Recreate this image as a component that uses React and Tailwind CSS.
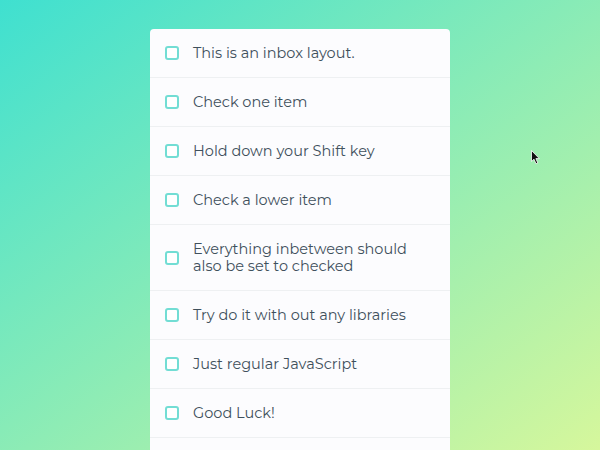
import { useState } from "react";

const ITEMS = [
    "This is an inbox layout.",
    "Check one item",
    "Hold down your Shift key",
    "Check a lower item",
    "Everything inbetween should also be set to checked",
    "Try do it with out any libraries",
    "Just regular JavaScript",
    "Good Luck!",
];

function Cursor() {
    return (
        <svg className="absolute left-[531px] top-[150px]" width="10" height="15" viewBox="0 0 10 15">
            <path d="M0.5 0.5 L0.5 11.5 L3 9.2 L5 13.8 L6.8 13 L4.9 8.6 L8.3 8.6 Z" fill="#111" stroke="#fff" strokeWidth="0.8" />
        </svg>
    );
}

export default function App() {
    const [checked, setChecked] = useState(ITEMS.map(() => false));

    const toggle = i => {
        setChecked(c => c.map((v, j) => (j === i ? !v : v)));
    };

    return (
        <div className="relative h-[450px] w-[600px] overflow-hidden bg-[linear-gradient(to_bottom_right,#3fe0d0,#d6f79c)] font-['Montserrat','Lato',sans-serif]">
            <div className="mx-auto mt-[29px] w-[300px] rounded-[4px] bg-[#fcfcfe] pb-[20px]">
                {ITEMS.map((text, i) => (
                    <label key={i} className="flex items-center border-b border-[#eef0f2] pl-[15px] pr-[20px]">
                        <input type="checkbox" checked={checked[i]} onChange={() => toggle(i)} className="sr-only" />
                        <span className="h-[14px] w-[14px] shrink-0 rounded-[3px] border-2 border-[#72ddd4] bg-white" />
                        <p className="py-[15.5px] pl-[14px] text-[14.5px] leading-[17px] text-[#3f505c]">{text}</p>
                    </label>
                ))}
            </div>
            <Cursor />
        </div>
    );
}
